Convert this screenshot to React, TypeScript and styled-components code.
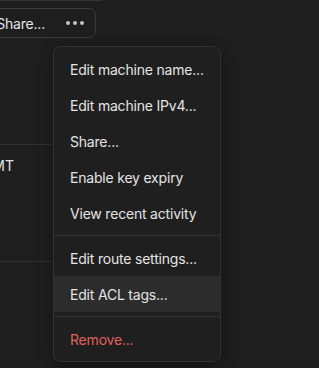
import React from "react";
import styled, { createGlobalStyle } from "styled-components";

const GlobalStyle = createGlobalStyle`
  html, body { margin: 0; padding: 0; background: #1e1e1e; }
  body { font-family: Inter, "Noto Sans", sans-serif; color: #e4e4e4; -webkit-font-smoothing: antialiased; }
`;

const Page = styled.div`
  position: relative;
  width: 319px;
  height: 368px;
  overflow: hidden;
  background: #1e1e1e;
`;

const Column = styled.div`
  width: 102px;
  border-top: 1px solid #343434;
`;

const Toolbar = styled.div`
  display: flex;
  justify-content: flex-end;
  padding: 7px 6px 0 0;
  height: 30px;
`;

const SplitButton = styled.button`
  flex-shrink: 0;
  display: flex;
  align-items: center;
  gap: 21px;
  height: 30px;
  box-sizing: border-box;
  padding: 0 11px 0 14px;
  background: transparent;
  border: 1px solid #3a3a3a;
  border-radius: 7px;
  color: #e4e4e4;
  font-family: inherit;
  font-size: 14px;
  letter-spacing: -0.2px;
`;

const Dots = styled.span`
  display: flex;
  gap: 3px;
  align-items: center;
`;

const Dot = styled.span`
  width: 4px;
  height: 4px;
  border-radius: 50%;
  background: #c4c4c4;
`;

const Row = styled.div<{ $h: number }>`
  height: ${(p) => p.$h}px;
  box-sizing: border-box;
  border-bottom: 1px solid #303030;
`;

const Cell = styled.div`
  display: flex;
  justify-content: flex-end;
  width: 14px;
  padding-top: 11px;
  font-size: 14px;
  line-height: 20px;
  color: #e4e4e4;
  white-space: nowrap;
`;

const Menu = styled.div`
  position: absolute;
  left: 53px;
  top: 46px;
  width: 168px;
  box-sizing: border-box;
  padding: 4px 0;
  background: #1f1f1f;
  border: 1px solid #333333;
  border-radius: 8px;
  box-shadow: 0 6px 16px rgba(0, 0, 0, 0.35);
`;

const Item = styled.div<{ $active?: boolean; $danger?: boolean }>`
  display: flex;
  align-items: center;
  height: 36px;
  padding: 0 16px;
  font-size: 14px;
  letter-spacing: -0.2px;
  white-space: nowrap;
  color: ${(p) => (p.$danger ? "#e0625b" : "#e4e4e4")};
  background: ${(p) => (p.$active ? "#2c2c2c" : "transparent")};
`;

const Separator = styled.div`
  height: 1px;
  margin: 4px 0;
  background: #333333;
`;

export default function App() {
  return (
    <Page>
      <GlobalStyle />
      <Column>
        <Toolbar>
          <SplitButton>
            <span>Share...</span>
            <Dots>
              <Dot />
              <Dot />
              <Dot />
            </Dots>
          </SplitButton>
        </Toolbar>
        <Row $h={107} />
        <Row $h={117}>
          <Cell>GMT</Cell>
        </Row>
      </Column>
      <Menu>
        <Item>Edit machine name...</Item>
        <Item>Edit machine IPv4...</Item>
        <Item>Share...</Item>
        <Item>Enable key expiry</Item>
        <Item>View recent activity</Item>
        <Separator />
        <Item>Edit route settings...</Item>
        <Item $active>Edit ACL tags...</Item>
        <Separator />
        <Item $danger>Remove...</Item>
      </Menu>
    </Page>
  );
}
